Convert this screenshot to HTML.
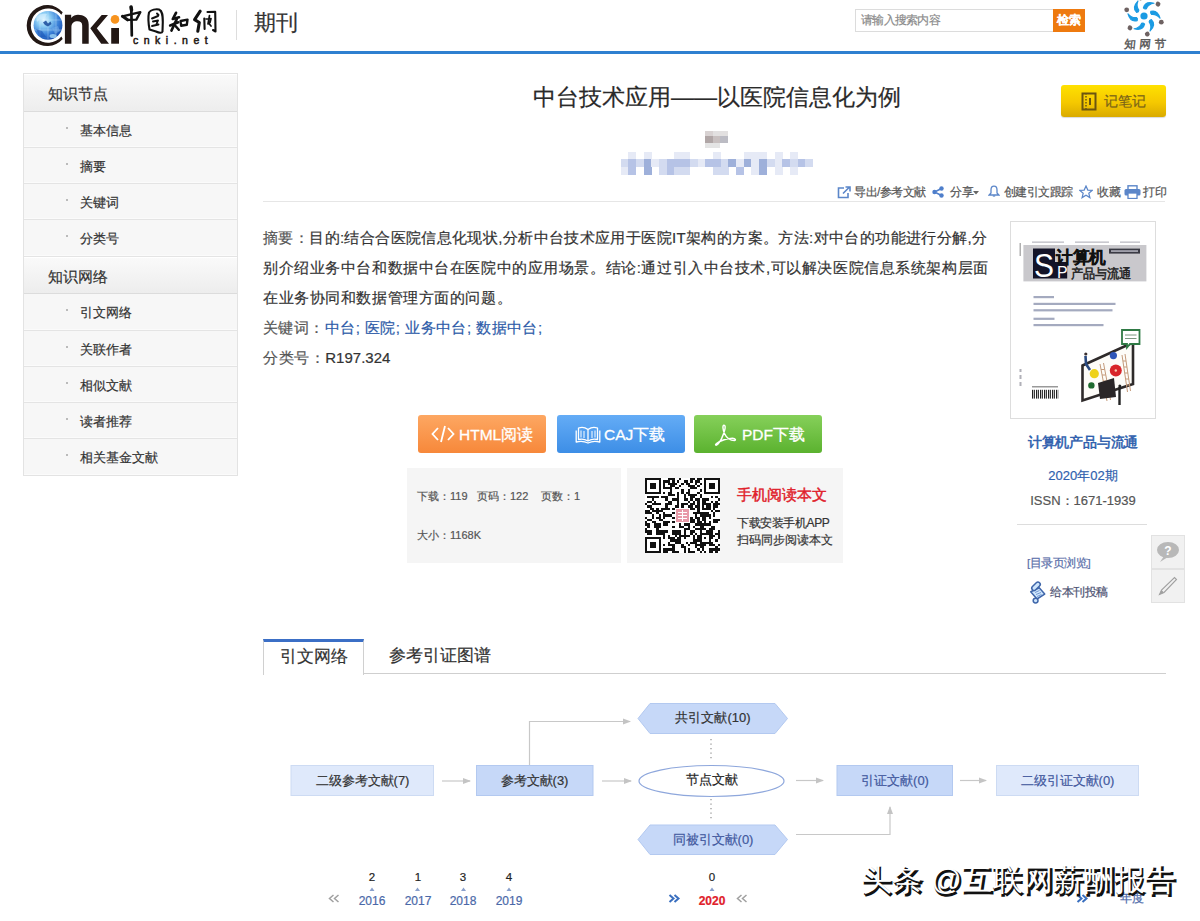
<!DOCTYPE html>
<html><head><meta charset="utf-8">
<style>
*{box-sizing:border-box}
html,body{margin:0;padding:0}
body{-webkit-text-stroke-width:0.2px;width:1200px;height:921px;position:relative;overflow:hidden;background:#fff;font-family:"Liberation Sans",sans-serif;color:#333}
.a{position:absolute}
.t{position:absolute;white-space:nowrap;line-height:1}
/* header */
#blueline{left:0;top:51px;width:1200px;height:3px;background:#2f80d0}
#sep{left:236px;top:10px;width:1px;height:30px;background:#ddd}
#qikan{left:254px;top:12px;font-size:22px;color:#333}
#search{left:855px;top:9px;width:199px;height:23px;border:1px solid #dcdcdc;background:#fff}
#search span{position:absolute;left:5px;top:4px;font-size:12px;letter-spacing:-0.75px;line-height:1;color:#8a8a8a}
#sbtn{left:1053px;top:9px;width:32px;height:23px;background:#ee7a0f;color:#fff;font-size:12px;font-weight:bold;line-height:23px;text-align:center}
/* sidebar */
#side{left:23px;top:73px;width:215px;height:403px;border:1px solid #e3e3e3;background:#f7f7f7}
.sh{position:absolute;left:0;width:213px;height:37px;background:linear-gradient(#fafafa,#ededed);border-bottom:1px solid #dcdcdc;box-shadow:inset 0 1px 0 #fff}
.sh span{position:absolute;left:24px;top:12px;font-size:15px;line-height:1;color:#333}
.si{position:absolute;left:0;width:213px;height:36px;border-bottom:1px solid #e4e4e4;box-shadow:inset 0 -1px 0 #fbfbfb}
.si span{position:absolute;left:56px;top:12px;font-size:13px;line-height:1;color:#333}
.si i{position:absolute;left:42px;top:15px;width:2px;height:2px;background:#bbb}

/* main */
#title{left:533px;top:86px;font-size:23px;color:#2a2a2a}
.blur{position:absolute;filter:blur(1.2px)}
#note{left:1061px;top:85px;width:105px;height:32px;border-radius:3px;background:linear-gradient(#ffe100,#f5c800 55%,#d9aa00);box-shadow:0 1px 1px rgba(0,0,0,.15)}
#note span{position:absolute;left:43px;top:9px;font-size:14px;line-height:1;color:#7a6418}
.tb{position:absolute;top:186px;font-size:12px;line-height:1;color:#555;white-space:nowrap}
#hr1{left:263px;top:201px;width:902px;height:1px;background:#e6e6e6}
.ab{position:absolute;left:263px;font-size:15px;letter-spacing:0.57px;line-height:1;color:#333;white-space:nowrap}
.kw{color:#2d5ba8}
.lab{color:#555}

#cover{left:1010px;top:221px;width:146px;height:198px;border:1px solid #ddd;background:#fff;overflow:hidden}
.rc{position:absolute;white-space:nowrap;line-height:1;text-align:center}
.btn{position:absolute;top:415px;width:128px;height:38px;border-radius:3px;color:#fff;font-size:15.5px;-webkit-text-stroke-width:0.3px}
.btn span{position:absolute;top:12px;line-height:1;white-space:nowrap}
#bh{left:418px;background:linear-gradient(#fda762,#f7883a)}
#bc{left:557px;background:linear-gradient(#64acf6,#3d8ee6)}
#bp{left:694px;background:linear-gradient(#86d05a,#5bb22f)}
.info{position:absolute;top:468px;height:95px;background:#f5f5f5}
.inf{position:absolute;font-size:11px;line-height:1;color:#555;white-space:nowrap}
.sidebx{left:1151px;width:34px;height:34px;background:#f1f1f1;border:1px solid #e2e2e2}

.cb{position:absolute;white-space:nowrap;line-height:1;font-size:13px;color:#333;text-align:center}
.cbl{color:#42589e}
.yr{position:absolute;white-space:nowrap;line-height:1;font-size:12px;color:#4a68a8;text-align:center;width:40px}
.cnt{position:absolute;white-space:nowrap;line-height:1;font-size:11.5px;color:#222;text-align:center;width:40px}
</style></head>
<body>
<!-- HEADER -->
<div class="a" id="blueline"></div>
<div class="a" id="sep"></div>
<div class="t" id="qikan">期刊</div>
<div class="a" id="search"><span>请输入搜索内容</span></div>
<div class="a" id="sbtn">检索</div>

<!-- SIDEBAR -->
<div class="a" id="side">
  <div class="sh" style="top:0;height:38px"><span>知识节点</span></div>
  <div class="si" style="top:38px"><i></i><span>基本信息</span></div>
  <div class="si" style="top:74px"><i></i><span>摘要</span></div>
  <div class="si" style="top:110px"><i></i><span>关键词</span></div>
  <div class="si" style="top:146px;height:37px"><i></i><span>分类号</span></div>
  <div class="sh" style="top:183px;height:37px"><span>知识网络</span></div>
  <div class="si" style="top:220px;height:37px"><i></i><span>引文网络</span></div>
  <div class="si" style="top:257px"><i></i><span>关联作者</span></div>
  <div class="si" style="top:293px"><i></i><span>相似文献</span></div>
  <div class="si" style="top:329px"><i></i><span>读者推荐</span></div>
  <div class="si" style="top:365px;border-bottom:0"><i></i><span>相关基金文献</span></div>
</div>

<!-- TITLE -->
<div class="t" id="title">中台技术应用——以医院信息化为例</div>
<div class="a" style="left:0;top:0;width:1200px;height:200px;filter:blur(0.7px)"><div class="a" style="left:628.2px;top:152px;width:8.0px;height:7px;background:#e6eaf6"></div><div class="a" style="left:643.6px;top:152px;width:8.0px;height:7px;background:#e6eaf6"></div><div class="a" style="left:674.4px;top:152px;width:8.0px;height:7px;background:#e6eaf6"></div><div class="a" style="left:682.1px;top:152px;width:8.0px;height:7px;background:#e6eaf6"></div><div class="a" style="left:712.9px;top:152px;width:8.0px;height:7px;background:#e6eaf6"></div><div class="a" style="left:743.7px;top:152px;width:8.0px;height:7px;background:#e6eaf6"></div><div class="a" style="left:751.4px;top:152px;width:8.0px;height:7px;background:#e6eaf6"></div><div class="a" style="left:759.1px;top:152px;width:8.0px;height:7px;background:#e6eaf6"></div><div class="a" style="left:774.5px;top:152px;width:8.0px;height:7px;background:#e6eaf6"></div><div class="a" style="left:789.9px;top:152px;width:8.0px;height:7px;background:#e6eaf6"></div><div class="a" style="left:620.5px;top:159px;width:8.0px;height:8px;background:#d3dbf0"></div><div class="a" style="left:628.2px;top:159px;width:8.0px;height:8px;background:#b6c3e6"></div><div class="a" style="left:635.9px;top:159px;width:8.0px;height:8px;background:#d3dbf0"></div><div class="a" style="left:643.6px;top:159px;width:8.0px;height:8px;background:#9eb0da"></div><div class="a" style="left:651.3px;top:159px;width:8.0px;height:8px;background:#e6eaf6"></div><div class="a" style="left:659.0px;top:159px;width:8.0px;height:8px;background:#d3dbf0"></div><div class="a" style="left:666.7px;top:159px;width:8.0px;height:8px;background:#b6c3e6"></div><div class="a" style="left:674.4px;top:159px;width:8.0px;height:8px;background:#b6c3e6"></div><div class="a" style="left:682.1px;top:159px;width:8.0px;height:8px;background:#b6c3e6"></div><div class="a" style="left:689.8px;top:159px;width:8.0px;height:8px;background:#d3dbf0"></div><div class="a" style="left:697.5px;top:159px;width:8.0px;height:8px;background:#e6eaf6"></div><div class="a" style="left:705.2px;top:159px;width:8.0px;height:8px;background:#b6c3e6"></div><div class="a" style="left:712.9px;top:159px;width:8.0px;height:8px;background:#b6c3e6"></div><div class="a" style="left:720.6px;top:159px;width:8.0px;height:8px;background:#d3dbf0"></div><div class="a" style="left:728.3px;top:159px;width:8.0px;height:8px;background:#9eb0da"></div><div class="a" style="left:736.0px;top:159px;width:8.0px;height:8px;background:#e6eaf6"></div><div class="a" style="left:743.7px;top:159px;width:8.0px;height:8px;background:#9eb0da"></div><div class="a" style="left:751.4px;top:159px;width:8.0px;height:8px;background:#e6eaf6"></div><div class="a" style="left:759.1px;top:159px;width:8.0px;height:8px;background:#9eb0da"></div><div class="a" style="left:766.8px;top:159px;width:8.0px;height:8px;background:#d3dbf0"></div><div class="a" style="left:774.5px;top:159px;width:8.0px;height:8px;background:#e6eaf6"></div><div class="a" style="left:782.2px;top:159px;width:8.0px;height:8px;background:#b6c3e6"></div><div class="a" style="left:789.9px;top:159px;width:8.0px;height:8px;background:#d3dbf0"></div><div class="a" style="left:797.6px;top:159px;width:8.0px;height:8px;background:#b6c3e6"></div><div class="a" style="left:805.3px;top:159px;width:8.0px;height:8px;background:#d3dbf0"></div><div class="a" style="left:620.5px;top:167px;width:8.0px;height:8px;background:#e6eaf6"></div><div class="a" style="left:628.2px;top:167px;width:8.0px;height:8px;background:#b6c3e6"></div><div class="a" style="left:643.6px;top:167px;width:8.0px;height:8px;background:#9eb0da"></div><div class="a" style="left:659.0px;top:167px;width:8.0px;height:8px;background:#d3dbf0"></div><div class="a" style="left:666.7px;top:167px;width:8.0px;height:8px;background:#b6c3e6"></div><div class="a" style="left:674.4px;top:167px;width:8.0px;height:8px;background:#d3dbf0"></div><div class="a" style="left:682.1px;top:167px;width:8.0px;height:8px;background:#d3dbf0"></div><div class="a" style="left:712.9px;top:167px;width:8.0px;height:8px;background:#d3dbf0"></div><div class="a" style="left:720.6px;top:167px;width:8.0px;height:8px;background:#d3dbf0"></div><div class="a" style="left:736.0px;top:167px;width:8.0px;height:8px;background:#b6c3e6"></div><div class="a" style="left:751.4px;top:167px;width:8.0px;height:8px;background:#e6eaf6"></div><div class="a" style="left:759.1px;top:167px;width:8.0px;height:8px;background:#9eb0da"></div><div class="a" style="left:774.5px;top:167px;width:8.0px;height:8px;background:#e6eaf6"></div><div class="a" style="left:789.9px;top:167px;width:8.0px;height:8px;background:#e6eaf6"></div><div class="a" style="left:705px;top:131px;width:8px;height:5px;background:#d8d2d2"></div><div class="a" style="left:713px;top:131px;width:15px;height:5px;background:#e2e0e0"></div><div class="a" style="left:705px;top:136px;width:8px;height:7px;background:#b0a6a6"></div><div class="a" style="left:713px;top:136px;width:7px;height:7px;background:#c8c0c0"></div><div class="a" style="left:720px;top:136px;width:8px;height:7px;background:#bcbcc4"></div><div class="a" style="left:705px;top:143px;width:15px;height:5px;background:#e4e4e4"></div></div>
<div class="a" id="note">
  <svg class="a" style="left:20px;top:7px" width="16" height="19" viewBox="0 0 16 19"><rect x="1.5" y="1.5" width="13" height="16" fill="none" stroke="#6b5510" stroke-width="2"/><line x1="5" y1="1" x2="5" y2="18" stroke="#6b5510" stroke-width="1.5" stroke-dasharray="1.5 1.5"/><line x1="9" y1="6" x2="9" y2="13" stroke="#6b5510" stroke-width="2"/></svg>
  <span>记笔记</span>
</div>

<!-- TOOLBAR -->
<svg class="a" style="left:837px;top:186px" width="14" height="13" viewBox="0 0 14 13"><path d="M7 2H1.5v9.5H11V7" fill="none" stroke="#5b86c9" stroke-width="1.6"/><path d="M6 7.5L12 1.5M8.5 1H13V5.5" fill="none" stroke="#5b86c9" stroke-width="1.6"/></svg>
<div class="tb" style="left:854px;letter-spacing:-0.5px">导出/参考文献</div>
<svg class="a" style="left:932px;top:186px" width="12" height="12" viewBox="0 0 12 12"><circle cx="9.5" cy="2.5" r="2.2" fill="#4f7fcb"/><circle cx="2.5" cy="6" r="2.2" fill="#4f7fcb"/><circle cx="9.5" cy="9.5" r="2.2" fill="#4f7fcb"/><path d="M9.5 2.5L2.5 6L9.5 9.5" fill="none" stroke="#4f7fcb" stroke-width="1.5"/></svg>
<div class="tb" style="left:950px">分享</div>
<svg class="a" style="left:973px;top:191px" width="6" height="4" viewBox="0 0 6 4"><path d="M0 0H6L3 3.5Z" fill="#666"/></svg>
<svg class="a" style="left:988px;top:185px" width="12" height="12" viewBox="0 0 12 12"><path d="M6 1.2C3.8 1.2 3 3 3 5V8L1.2 10H10.8L9 8V5C9 3 8.2 1.2 6 1.2Z" fill="none" stroke="#5b86c9" stroke-width="1.3"/><path d="M4.8 11H7.2" stroke="#5b86c9" stroke-width="1.2"/></svg>
<div class="tb" style="left:1004px;letter-spacing:-0.55px">创建引文跟踪</div>
<svg class="a" style="left:1079px;top:185px" width="14" height="14" viewBox="0 0 14 14"><path d="M7 1L8.8 5.1L13.2 5.4L9.8 8.2L10.9 12.6L7 10.2L3.1 12.6L4.2 8.2L0.8 5.4L5.2 5.1Z" fill="none" stroke="#5b86c9" stroke-width="1.2"/></svg>
<div class="tb" style="left:1097px">收藏</div>
<svg class="a" style="left:1124px;top:185px" width="17" height="14" viewBox="0 0 17 14"><rect x="4" y="0.8" width="9" height="4" fill="none" stroke="#5b86c9" stroke-width="1.4"/><rect x="0.5" y="4" width="16" height="6.5" rx="1.5" fill="#5b86c9"/><rect x="4" y="8" width="9" height="5.5" fill="#fff" stroke="#5b86c9" stroke-width="1.3"/></svg>
<div class="tb" style="left:1143px">打印</div>
<div class="a" id="hr1"></div>

<!-- ABSTRACT -->
<div class="ab" style="top:230px;letter-spacing:0.38px"><span class="lab">摘要：</span>目的:结合合医院信息化现状,分析中台技术应用于医院IT架构的方案。方法:对中台的功能进行分解,分</div>
<div class="ab" style="top:260px">别介绍业务中台和数据中台在医院中的应用场景。结论:通过引入中台技术,可以解决医院信息系统架构层面</div>
<div class="ab" style="top:290px">在业务协同和数据管理方面的问题。</div>
<div class="ab" style="top:320px;letter-spacing:0.45px"><span class="lab">关键词：</span><span class="kw">中台;&nbsp;医院;&nbsp;业务中台;&nbsp;数据中台;</span></div>
<div class="ab" style="top:350px"><span class="lab">分类号：</span><span style="letter-spacing:0">R197.324</span></div>

<!-- COVER -->
<div class="a" id="cover">
<svg class="a" style="left:-1px;top:-1px" width="146" height="198" viewBox="1010 221 146 198">
  <g fill="#bcbcc4"><rect x="1032" y="241.5" width="32" height="1.3"/><rect x="1075" y="241.5" width="34" height="1.3"/><rect x="1120" y="241.5" width="20" height="1.3"/></g>
  <rect x="1019.5" y="243" width="1.5" height="13" fill="#b0b0b0"/>
  <rect x="1023.4" y="245" width="123" height="36.4" fill="#c9c8cc"/>
  <path d="M1033 248.6H1055V262H1067.2V278.4H1033Z" fill="#141428"/>
  <text x="1034" y="277" font-family="Liberation Sans" font-size="33" fill="#fff" textLength="20" lengthAdjust="spacingAndGlyphs">S</text>
  <text x="1057" y="277.5" font-family="Liberation Sans" font-size="16" fill="#fff">P</text>
  <text x="1056" y="263" font-size="16.5" font-weight="bold" fill="#111" stroke="#111" stroke-width="0.4" textLength="50" lengthAdjust="spacingAndGlyphs">计算机</text>
  <text x="1070.5" y="278.3" font-size="12.5" fill="#222" stroke="#222" stroke-width="0.5" textLength="61" lengthAdjust="spacingAndGlyphs">产品与流通</text>
  <rect x="1109" y="248.6" width="31" height="5" fill="#3a3a44"/>
  <rect x="1111" y="250.3" width="27" height="1.5" fill="#b8b8c4"/>
  <g fill="#a4aabf">
    <rect x="1033.5" y="296" width="20.5" height="2.2"/>
    <rect x="1033.5" y="302.8" width="82" height="2.2"/>
    <rect x="1033.5" y="309.2" width="79" height="2.2"/>
    <rect x="1033.5" y="317.7" width="21" height="2.2"/>
    <rect x="1033.5" y="324" width="70" height="2.2"/>
  </g>
  <g fill="#b0b0b8"><rect x="1019.5" y="369" width="2" height="3"/><rect x="1019.5" y="375" width="2" height="4"/><rect x="1019.5" y="382" width="2" height="4"/></g>
  <rect x="1032" y="386" width="26" height="1.5" fill="#999"/>
  <rect x="1031.3" y="389.8" width="27" height="8.8" fill="url(#bc)"/>
  <defs><pattern id="bc" width="4" height="9" patternUnits="userSpaceOnUse"><rect width="1.3" height="9" fill="#222"/><rect x="2" width="0.9" height="9" fill="#222"/></pattern></defs>
  <path d="M1082.5 365.5L1133 342.5V384L1082.5 400.5Z" fill="#fdfcf8" stroke="#2e2a2a" stroke-width="2.6"/>
  <path d="M1122 330H1139.5V344H1130L1127 347.5V344H1122Z" fill="#fff" stroke="#2f7a45" stroke-width="1.8"/>
  <path d="M1125 335H1136.5M1125 338.5H1136.5" stroke="#6a8a70" stroke-width=".9"/>
  <circle cx="1094.3" cy="373.7" r="4.6" fill="#eed21a"/>
  <circle cx="1091.4" cy="385.4" r="3.2" fill="#1e6a2e"/>
  <circle cx="1113.4" cy="355.6" r="3.6" fill="#2f56b8"/>
  <circle cx="1115.8" cy="370.5" r="6" fill="#d8252a"/>
  <circle cx="1115.8" cy="370.5" r="1.2" fill="#f6c9b0"/>
  <g stroke="#c49a7a" stroke-width="1"><path d="M1100 364L1107 401M1103.5 363L1110.5 400M1101 369.5H1104.5M1102 375H1105.5M1103 381H1106.5M1104 387H1107.5M1105 393H1108.5"/><path d="M1122 355L1127.5 392M1125 354L1130.5 391M1123 361H1126M1124 367H1127M1125 373H1128M1126 379H1129M1127 385H1130"/></g>
  <path d="M1098 383L1114 378L1116 397L1100 399Z" fill="#2a2628"/>
  <circle cx="1085.8" cy="354" r="1.6" fill="#3a3030"/><path d="M1085.5 356L1086 364L1090 370" stroke="#2a4a80" stroke-width="2.6" fill="none"/>
  <path d="M1119.5 387V405" stroke="#222" stroke-width="2.4"/><circle cx="1119.8" cy="386" r="1.5" fill="#222"/>
</svg>
</div>
<div class="rc" style="left:1010px;top:436px;width:146px;font-size:13.5px;color:#2f5fae;-webkit-text-stroke-width:0.55px;letter-spacing:-0.2px">计算机产品与流通</div>
<div class="rc" style="left:1010px;top:469px;width:146px;font-size:13px;color:#2f5fae">2020年02期</div>
<div class="rc" style="left:1010px;top:494px;width:146px;font-size:13px;color:#555">ISSN：1671-1939</div>
<div class="a" style="left:1017px;top:524px;width:130px;height:1px;background:#ddd"></div>
<div class="t" style="left:1027px;top:558px;font-size:11.5px;letter-spacing:-0.45px;color:#5a70aa">[目录页浏览]</div>
<svg class="a" style="left:1024px;top:578px" width="28" height="28" viewBox="1024 578 28 28">
  <g stroke="#3f66aa" stroke-width="1.5" fill="#cfe6fc">
    <path d="M1030.7 591.7L1039.2 587.8L1044.7 594.1L1037 599Z" stroke-linejoin="round"/>
    <rect x="1031" y="584" width="10" height="4.6" rx="2.3" transform="rotate(-45 1036 586.3)"/>
    <circle cx="1035.6" cy="600.6" r="2.4"/>
  </g>
  <path d="M1035 592.5L1039.5 590.5M1036 594.5L1041 592.5M1037 596.5L1041.5 594.5" stroke="#5a84c8" stroke-width="0.8"/>
</svg>
<div class="t" style="left:1050px;top:586px;font-size:12px;letter-spacing:-0.5px;color:#4c5272">给本刊投稿</div>
<div class="a sidebx" style="top:535px"></div>
<div class="a sidebx" style="top:569px"></div>
<svg class="a" style="left:1155px;top:540px" width="26" height="24" viewBox="0 0 26 24"><ellipse cx="13" cy="10" rx="11" ry="8" fill="#b8b8b8"/><path d="M9 16L5 22L13 17Z" fill="#b8b8b8"/><text x="13" y="14.5" font-size="12" font-weight="bold" fill="#fff" text-anchor="middle" font-family="Liberation Sans">?</text></svg>
<svg class="a" style="left:1156px;top:574px" width="24" height="24" viewBox="0 0 24 24"><path d="M3.5 20.5L5.5 16L18.5 3.5L20.5 5.5L8 18.5Z" fill="none" stroke="#a0a0a0" stroke-width="1.1"/><path d="M3.5 20.5L5.5 16L8 18.5Z" fill="#a0a0a0"/></svg>

<!-- BUTTONS -->
<div class="btn" id="bh">
  <svg class="a" style="left:13px;top:10px" width="24" height="18" viewBox="0 0 24 18"><path d="M7 3L1.5 9L7 15M17 3L22.5 9L17 15M14 1L10 17" fill="none" stroke="#fff" stroke-width="1.8"/></svg>
  <span style="left:41px">HTML阅读</span>
</div>
<div class="btn" id="bc">
  <svg class="a" style="left:18px;top:11px" width="26" height="18" viewBox="0 0 26 18"><g fill="none" stroke="#fff" stroke-width="1.3" stroke-linejoin="round"><path d="M13 3.5C10 1.2 6 1 3.5 2V13.5C6.5 12.8 10 13.2 13 15C16 13.2 19.5 12.8 22.5 13.5V2C20 1 16 1.2 13 3.5Z"/><path d="M13 3.5V15"/><path d="M1.2 4.5V16C5 15 9.5 15.2 13 17C16.5 15.2 21 15 24.8 16V4.5"/><path d="M6 4.5V11.5M9 5V12M17 5V12M20 4.5V11.5" stroke-width="1"/></g></svg>
  <span style="left:47px">CAJ下载</span>
</div>
<div class="btn" id="bp">
  <svg class="a" style="left:19px;top:9px" width="24" height="22" viewBox="0 0 24 22"><path d="M11 1.2C9.3 1.2 9.8 5.5 11.5 9.5C13.5 14 17.5 16.5 21.5 16.5C23 16.5 22.8 14.2 19.5 14.2C15 14.2 7 16.5 3.5 19.5C1.5 21.2 3.2 21.8 4.8 20.3C7.5 17.5 10.3 11 11.7 6C12.5 3 12.2 1.2 11 1.2Z" fill="none" stroke="#fff" stroke-width="1.4" stroke-linejoin="round"/></svg>
  <span style="left:48px">PDF下载</span>
</div>

<!-- INFO BOXES -->
<div class="info" style="left:407px;width:214px">
  <div class="inf" style="left:10px;top:23px">下载：119</div><div class="inf" style="left:70px;top:23px">页码：122</div><div class="inf" style="left:134px;top:23px">页数：1</div>
  <div class="inf" style="left:10px;top:62px">大小：1168K</div>
</div>
<div class="info" style="left:627px;width:216px">
  <svg class="a" id="qr" style="left:18px;top:10px" width="75" height="75" viewBox="0 0 33 33" shape-rendering="crispEdges"><rect width="33" height="33" fill="#fff"/><path d="M0 0h7v1h-7zM10 0h3v1h-3zM15 0h1v1h-1zM20 0h2v1h-2zM23 0h2v1h-2zM26 0h7v1h-7zM0 1h1v1h-1zM6 1h1v1h-1zM8 1h3v1h-3zM12 1h1v1h-1zM14 1h1v1h-1zM17 1h2v1h-2zM20 1h1v1h-1zM22 1h2v1h-2zM26 1h1v1h-1zM32 1h1v1h-1zM0 2h1v1h-1zM2 2h3v1h-3zM6 2h1v1h-1zM8 2h1v1h-1zM10 2h4v1h-4zM16 2h1v1h-1zM18 2h2v1h-2zM22 2h1v1h-1zM24 2h1v1h-1zM26 2h1v1h-1zM28 2h3v1h-3zM32 2h1v1h-1zM0 3h1v1h-1zM2 3h3v1h-3zM6 3h1v1h-1zM8 3h1v1h-1zM11 3h2v1h-2zM15 3h1v1h-1zM19 3h3v1h-3zM23 3h1v1h-1zM26 3h1v1h-1zM28 3h3v1h-3zM32 3h1v1h-1zM0 4h1v1h-1zM2 4h3v1h-3zM6 4h1v1h-1zM8 4h4v1h-4zM13 4h2v1h-2zM20 4h3v1h-3zM26 4h1v1h-1zM28 4h3v1h-3zM32 4h1v1h-1zM0 5h1v1h-1zM6 5h1v1h-1zM11 5h1v1h-1zM16 5h1v1h-1zM19 5h1v1h-1zM24 5h1v1h-1zM26 5h1v1h-1zM32 5h1v1h-1zM0 6h7v1h-7zM8 6h1v1h-1zM10 6h2v1h-2zM14 6h1v1h-1zM16 6h1v1h-1zM18 6h2v1h-2zM23 6h1v1h-1zM26 6h7v1h-7zM10 7h3v1h-3zM14 7h1v1h-1zM17 7h1v1h-1zM19 7h4v1h-4zM24 7h1v1h-1zM1 8h5v1h-5zM7 8h3v1h-3zM14 8h1v1h-1zM17 8h1v1h-1zM20 8h2v1h-2zM24 8h1v1h-1zM29 8h1v1h-1zM31 8h1v1h-1zM3 9h1v1h-1zM9 9h1v1h-1zM12 9h3v1h-3zM17 9h2v1h-2zM20 9h1v1h-1zM22 9h2v1h-2zM25 9h3v1h-3zM32 9h1v1h-1zM1 10h2v1h-2zM4 10h1v1h-1zM10 10h2v1h-2zM14 10h1v1h-1zM19 10h1v1h-1zM21 10h1v1h-1zM23 10h1v1h-1zM25 10h2v1h-2zM29 10h1v1h-1zM31 10h1v1h-1zM0 11h1v1h-1zM3 11h4v1h-4zM9 11h3v1h-3zM14 11h1v1h-1zM16 11h3v1h-3zM20 11h2v1h-2zM23 11h1v1h-1zM25 11h4v1h-4zM30 11h3v1h-3zM1 12h2v1h-2zM9 12h1v1h-1zM13 12h2v1h-2zM16 12h1v1h-1zM19 12h2v1h-2zM22 12h2v1h-2zM25 12h1v1h-1zM27 12h2v1h-2zM30 12h2v1h-2zM2 13h2v1h-2zM5 13h1v1h-1zM7 13h4v1h-4zM12 13h1v1h-1zM14 13h3v1h-3zM20 13h2v1h-2zM23 13h1v1h-1zM25 13h4v1h-4zM30 13h1v1h-1zM0 14h2v1h-2zM3 14h5v1h-5zM13 14h1v1h-1zM15 14h1v1h-1zM18 14h1v1h-1zM23 14h1v1h-1zM29 14h1v1h-1zM31 14h2v1h-2zM0 15h3v1h-3zM5 15h1v1h-1zM8 15h1v1h-1zM12 15h1v1h-1zM18 15h1v1h-1zM21 15h7v1h-7zM30 15h1v1h-1zM3 16h1v1h-1zM6 16h1v1h-1zM8 16h4v1h-4zM13 16h1v1h-1zM15 16h1v1h-1zM18 16h2v1h-2zM22 16h1v1h-1zM24 16h5v1h-5zM30 16h1v1h-1zM0 17h1v1h-1zM3 17h1v1h-1zM5 17h2v1h-2zM8 17h1v1h-1zM12 17h1v1h-1zM16 17h1v1h-1zM18 17h3v1h-3zM22 17h2v1h-2zM25 17h2v1h-2zM28 17h1v1h-1zM1 18h2v1h-2zM6 18h2v1h-2zM13 18h2v1h-2zM18 18h4v1h-4zM23 18h1v1h-1zM25 18h2v1h-2zM30 18h3v1h-3zM0 19h1v1h-1zM3 19h2v1h-2zM8 19h3v1h-3zM12 19h1v1h-1zM15 19h1v1h-1zM19 19h3v1h-3zM23 19h2v1h-2zM26 19h1v1h-1zM28 19h1v1h-1zM30 19h2v1h-2zM0 20h2v1h-2zM4 20h3v1h-3zM8 20h2v1h-2zM15 20h1v1h-1zM17 20h3v1h-3zM22 20h7v1h-7zM1 21h1v1h-1zM4 21h3v1h-3zM12 21h1v1h-1zM15 21h2v1h-2zM19 21h1v1h-1zM21 21h1v1h-1zM24 21h2v1h-2zM29 21h2v1h-2zM0 22h1v1h-1zM5 22h1v1h-1zM17 22h3v1h-3zM22 22h5v1h-5zM28 22h3v1h-3zM0 23h3v1h-3zM5 23h5v1h-5zM12 23h4v1h-4zM17 23h1v1h-1zM20 23h2v1h-2zM24 23h1v1h-1zM27 23h3v1h-3zM32 23h1v1h-1zM1 24h2v1h-2zM5 24h4v1h-4zM12 24h4v1h-4zM17 24h1v1h-1zM20 24h1v1h-1zM22 24h1v1h-1zM24 24h6v1h-6zM31 24h2v1h-2zM8 25h1v1h-1zM10 25h1v1h-1zM13 25h1v1h-1zM15 25h5v1h-5zM21 25h1v1h-1zM23 25h2v1h-2zM28 25h3v1h-3zM32 25h1v1h-1zM0 26h7v1h-7zM8 26h1v1h-1zM10 26h3v1h-3zM14 26h2v1h-2zM17 26h1v1h-1zM21 26h1v1h-1zM23 26h2v1h-2zM26 26h1v1h-1zM28 26h2v1h-2zM32 26h1v1h-1zM0 27h1v1h-1zM6 27h1v1h-1zM11 27h5v1h-5zM21 27h4v1h-4zM28 27h1v1h-1zM31 27h1v1h-1zM0 28h1v1h-1zM2 28h3v1h-3zM6 28h1v1h-1zM10 28h1v1h-1zM13 28h3v1h-3zM18 28h1v1h-1zM20 28h3v1h-3zM24 28h6v1h-6zM0 29h1v1h-1zM2 29h3v1h-3zM6 29h1v1h-1zM8 29h1v1h-1zM10 29h3v1h-3zM16 29h1v1h-1zM19 29h1v1h-1zM22 29h5v1h-5zM28 29h3v1h-3zM32 29h1v1h-1zM0 30h1v1h-1zM2 30h3v1h-3zM6 30h1v1h-1zM12 30h1v1h-1zM16 30h2v1h-2zM22 30h1v1h-1zM24 30h2v1h-2zM31 30h1v1h-1zM0 31h1v1h-1zM6 31h1v1h-1zM8 31h5v1h-5zM17 31h1v1h-1zM19 31h1v1h-1zM23 31h1v1h-1zM25 31h1v1h-1zM28 31h5v1h-5zM0 32h7v1h-7zM8 32h2v1h-2zM12 32h3v1h-3zM17 32h1v1h-1zM19 32h3v1h-3zM24 32h1v1h-1zM26 32h1v1h-1zM28 32h2v1h-2zM31 32h1v1h-1z" fill="#111"/><rect x="13" y="13" width="7" height="7" fill="#fff"/><rect x="13.5" y="13.5" width="6" height="6" fill="#e89aa8"/><path d="M14.5 15h4M14.5 16.5h4M14.5 18h4M16.5 14v5" stroke="#fff" stroke-width="0.45"/></svg>
  <div class="t" style="left:110px;top:19px;font-size:15px;color:#e0202a;-webkit-text-stroke-width:0.45px">手机阅读本文</div>
  <div class="t" style="left:110px;top:49px;font-size:12px;letter-spacing:-0.4px;color:#333">下载安装手机APP</div>
  <div class="t" style="left:110px;top:66px;font-size:12px;color:#333">扫码同步阅读本文</div>
</div>

<!-- TABS -->
<div class="a" style="left:363px;top:673px;width:803px;height:1px;background:#cfcfcf"></div>
<div class="a" style="left:263px;top:639px;width:101px;height:36px;background:#fff;border:1px solid #d0d0d0;border-top:3px solid #3b6fc6;border-bottom:0"></div>
<div class="t" style="left:280px;top:648px;font-size:17px;color:#333">引文网络</div>
<div class="t" style="left:389px;top:647px;font-size:17px;color:#333">参考引证图谱</div>

<!-- CHART -->
<svg class="a" style="left:0;top:690px" width="1200" height="180" viewBox="0 690 1200 180">
  <defs><marker id="ar" markerWidth="8" markerHeight="8" refX="7" refY="4" orient="auto" markerUnits="userSpaceOnUse"><path d="M0 1L8 4L0 7Z" fill="#c4c4c4"/></marker></defs>
  <rect x="291" y="765.5" width="142.5" height="30" fill="#dfe9fb" stroke="#cddbf3" stroke-width="1"/>
  <rect x="476.5" y="765.5" width="116.5" height="30" fill="#c6d8f8" stroke="#b3c9f0" stroke-width="1"/>
  <rect x="837" y="765.5" width="115.5" height="30" fill="#c6d8f8" stroke="#b3c9f0" stroke-width="1"/>
  <rect x="996.5" y="765.5" width="142" height="30" fill="#dfe9fb" stroke="#cddbf3" stroke-width="1"/>
  <ellipse cx="711.5" cy="781" rx="72.5" ry="15.5" fill="#fff" stroke="#8ea7dc" stroke-width="1.2"/>
  <path d="M638 718.5L650 703.5H775L787.5 718.5L775 733.5H650Z" fill="#c6d8f8" stroke="#b3c9f0" stroke-width="1"/>
  <path d="M638 839.5L650 825H775L787.5 839.5L775 854.5H650Z" fill="#c6d8f8" stroke="#b3c9f0" stroke-width="1"/>
  <g stroke="#c8c8c8" stroke-width="1.2" fill="none">
    <path d="M442 781H470" marker-end="url(#ar)"/>
    <path d="M602 781H631" marker-end="url(#ar)"/>
    <path d="M796 780.5H823" marker-end="url(#ar)"/>
    <path d="M960 780.5H986" marker-end="url(#ar)"/>
    <path d="M529.5 765V721.5H630" marker-end="url(#ar)"/>
    <path d="M796 834.5H890V807" marker-end="url(#ar)"/>
  </g>
  <g stroke="#999" stroke-width="1.3" stroke-dasharray="1.3 3.2">
    <path d="M711 739V759"/>
    <path d="M711 799V819"/>
  </g>
</svg>
<div class="cb" style="left:291px;top:774px;width:143px">二级参考文献(7)</div>
<div class="cb" style="left:476px;top:774px;width:117px">参考文献(3)</div>
<div class="cb" style="left:639px;top:773px;width:145px;color:#222">节点文献</div>
<div class="cb cbl" style="left:837px;top:774px;width:116px">引证文献(0)</div>
<div class="cb cbl" style="left:996px;top:774px;width:143px">二级引证文献(0)</div>
<div class="cb" style="left:638px;top:711px;width:150px">共引文献(10)</div>
<div class="cb cbl" style="left:638px;top:833px;width:150px">同被引文献(0)</div>

<!-- YEARS -->
<div class="cnt" style="left:352px;top:872px">2</div>
<div class="cnt" style="left:398px;top:872px">1</div>
<div class="cnt" style="left:443px;top:872px">3</div>
<div class="cnt" style="left:489px;top:872px">4</div>
<div class="cnt" style="left:692px;top:872px">0</div>
<svg class="a" style="left:0;top:885px" width="1200" height="8" viewBox="0 885 1200 8">
  <g fill="#8aa0cc"><path d="M369.5 891L372 887.5L374.5 891Z"/><path d="M415 891L417.5 887.5L420 891Z"/><path d="M461 891L463.5 887.5L466 891Z"/><path d="M506.5 891L509 887.5L511.5 891Z"/><path d="M709.5 891L712 887.5L714.5 891Z"/></g>
</svg>
<div class="yr" style="left:352px;top:895px">2016</div>
<div class="yr" style="left:398px;top:895px">2017</div>
<div class="yr" style="left:443px;top:895px">2018</div>
<div class="yr" style="left:489px;top:895px">2019</div>
<div class="yr" style="left:692px;top:895px;color:#e0202a;font-weight:bold">2020</div>
<svg class="a" style="left:0;top:890px" width="1200" height="16" viewBox="0 890 1200 16">
  <g fill="none" stroke="#a0a0a0" stroke-width="1.5"><path d="M333.5 895L329.5 898.5L333.5 902M338.5 895L334.5 898.5L338.5 902"/><path d="M741.5 895L737.5 898.5L741.5 902M746.5 895L742.5 898.5L746.5 902"/></g>
  <g fill="none" stroke="#3a6fbf" stroke-width="2"><path d="M669.5 895L673.5 898.5L669.5 902M674.5 895L678.5 898.5L674.5 902"/><path d="M1077.5 895L1081.5 898.5L1077.5 902M1082.5 895L1086.5 898.5L1082.5 902"/></g>
</svg>
<div class="t" style="left:1120px;top:893px;font-size:11.5px;color:#4a68a8">年度</div>

<!-- WATERMARK -->
<div class="t" style="left:863px;top:867px;font-size:30px;letter-spacing:0.5px;color:#111;-webkit-text-stroke:1.4px #111">头条 @互联网薪酬报告</div><div class="t" style="left:861.5px;top:865px;font-size:30px;letter-spacing:0.5px;color:#fff;-webkit-text-stroke:0px">头条 @互联网薪酬报告</div>

<!-- LOGO -->
<svg class="a" style="left:0;top:0" width="125" height="50" viewBox="0 0 125 50">
  <defs>
    <radialGradient id="gl" cx="0.35" cy="0.3" r="0.8">
      <stop offset="0" stop-color="#e4f6ff"/><stop offset="0.3" stop-color="#8ccdf4"/><stop offset="0.65" stop-color="#3a80d8"/><stop offset="1" stop-color="#1246a8"/>
    </radialGradient>
  </defs>
  <path d="M62.7 12.2A20.5 20.5 0 1 0 62.7 39L61.4 36.4A17.2 17.2 0 1 1 61.4 14.8Z" fill="#231815"/>
  <circle cx="48" cy="25.3" r="14.4" fill="url(#gl)"/><g stroke="#d8f0ff" stroke-width=".6" opacity=".55" fill="none"><path d="M34 20H62M34 30H62M40 11.5V39M48 11V39.5M56 11.5V39"/></g>
  <path d="M43 22.5L46 20.5L48 23.5L50.5 21.5L51.5 24L48 26.5L45 25Z" fill="#1a4a9a" opacity=".85"/><path d="M36 17C39 14 44 13 47 14L45 18L40 19L37 22Z" fill="#d6f0ff" opacity=".6"/><path d="M52 28L58 26L60 31L55 34Z" fill="#7fb8ee" opacity=".5"/>
  <path d="M36 29L42 31L46 37L40 37Z" fill="#1d55b5" opacity=".6"/>
  <ellipse cx="53" cy="36" rx="3.5" ry="2" fill="#9fd4f5" opacity=".8"/>
  <path d="M64.9 43.7V14.8H71.2V18C73 15.5 75.5 14.7 78 14.7C83.5 14.7 88.7 17.5 88.7 24.5V43.7H82.2V25.5C82.2 22.5 80.5 21.2 77.5 21.2C74 21.2 71.4 23.2 71.4 27V43.7Z" fill="#231815"/>
  <path d="M101.7 15H108L96.8 28.3L109 43.7H101.2L90.3 28.3Z" fill="#231815"/>
  <rect x="111.2" y="28" width="7.8" height="15.7" fill="#231815"/>
  <circle cx="115" cy="19.4" r="4.3" fill="#f7931e"/>
</svg>
<svg class="a" style="left:118px;top:0" width="102" height="40" viewBox="118 0 102 40">
  <g fill="none" stroke="#111" stroke-linecap="round" stroke-linejoin="round">
    <path d="M131.3 7.5L131.8 35.5" stroke-width="2.7"/>
    <path d="M131 7L131.5 10" stroke-width="3.5"/>
    <path d="M122.5 16.3L127.5 19.8" stroke-width="3.1"/>
    <path d="M122.5 16.3L140.3 12.2L136.3 19.6L128 19.9" stroke-width="2.4"/>
    <path d="M149 12.5C151 9.5 156 9 159 9.5C162.5 11 162.8 15 162.8 22L162.5 31.5C162 33.5 159 33 156 31.5L149.5 29.5C148.5 24 148 17 149 12.5Z" stroke-width="2.1"/>
    <path d="M152 18.5L158 16M153 21.5L158 20.5L156.5 24M152 26L158.5 24.5M157 13.5L158.5 15" stroke-width="1.9"/>
    <path d="M176 12.8L172.8 19L179 17.3" stroke-width="2.7"/>
    <path d="M170.2 25.4L178.2 22.3" stroke-width="2.7"/>
    <path d="M176.8 19L171.5 30.5" stroke-width="2.7"/>
    <path d="M175.5 26L178.8 29.8" stroke-width="2.5"/>
    <path d="M180.6 21L187.5 19.6L186.8 24.8L181.2 25.8Z" stroke-width="2.4"/>
    <path d="M200.2 11.2L194.6 19.6L199.3 22.5L197.8 31.3" stroke-width="3.1"/>
    <path d="M204.3 18.5L204.6 29" stroke-width="2.1"/>
    <path d="M207.5 12L215.2 11.8L215.5 31.5L213 30" stroke-width="2.1"/>
    <path d="M209.5 15.5L208 24M206 19L211 18.5L210 22.5M209 23.5L211 26" stroke-width="1.7"/>
  </g>
</svg>
<div class="t" style="left:133px;top:35px;font-size:10.5px;letter-spacing:5.5px;color:#231815;-webkit-text-stroke-width:0.5px">cnki.net</div>

<!-- ZHIWANGJIE LOGO -->
<svg class="a" style="left:1115px;top:0" width="60" height="38" viewBox="-29 -16 60 38">
  <g id="pw">
    <path d="M6.8 -4.6Q13.5 -6.5 16 2.2Q12.5 -2.2 7.6 -1.6Q6 -2.6 6.8 -4.6Z" fill="#1b9be3" stroke="#1b9be3" stroke-width="1.2" stroke-linejoin="round"/>
    <circle cx="17.3" cy="6.2" r="2.4" fill="#6e6262"/>
  </g>
  <use href="#pw" transform="rotate(60)"/>
  <use href="#pw" transform="rotate(120)"/>
  <use href="#pw" transform="rotate(180)"/>
  <use href="#pw" transform="rotate(240)"/>
  <use href="#pw" transform="rotate(300)"/>
  <circle cx="0" cy="0" r="3.6" fill="#1b9be3"/>
</svg>
<div class="t" style="left:1124px;top:39px;font-family:'Liberation Serif',serif;font-size:11.5px;letter-spacing:3px;color:#555;-webkit-text-stroke-width:0.4px;transform:skewX(-6deg)">知网节</div>
</body></html>
